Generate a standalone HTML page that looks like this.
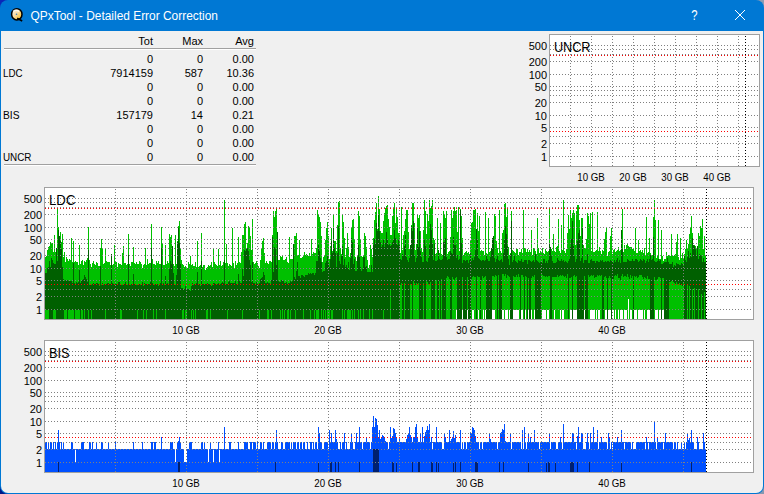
<!DOCTYPE html>
<html><head><meta charset="utf-8"><style>
html,body{margin:0;padding:0;background:#fff;}
body{width:764px;height:494px;overflow:hidden;}
svg{display:block;font-family:"Liberation Sans",sans-serif;font-size:11px;}
</style></head><body>
<svg width="764" height="494" viewBox="0 0 764 494" shape-rendering="crispEdges">
<rect x="0" y="0" width="10" height="10" fill="#0a28b8"/><rect x="754" y="0" width="10" height="10" fill="#8c9cb4"/><rect x="0" y="484" width="10" height="10" fill="#001888"/><rect x="754" y="484" width="10" height="10" fill="#8898b0"/><rect x="0" y="0" width="764" height="494" rx="8" fill="#0078d4" shape-rendering="auto"/><path d="M1 31H763V486a7 7 0 0 1 -7 7H8a7 7 0 0 1 -7 -7Z" fill="#f0f0f0" shape-rendering="auto"/><text x="30.5" y="20" fill="#fff" font-size="12px" textLength="187.5" lengthAdjust="spacingAndGlyphs">QPxTool - Detailed Error Correction</text><defs><linearGradient id="ig" x1="0" y1="0" x2="1" y2="1"><stop offset="0" stop-color="#fff6e8"/><stop offset="0.45" stop-color="#f8dca8"/><stop offset="1" stop-color="#ffb800"/></linearGradient></defs><g shape-rendering="auto"><ellipse cx="16.8" cy="14.3" rx="5.2" ry="5.6" fill="url(#ig)" stroke="#000" stroke-width="1.5"/><path d="M13 11.5q3 -2.5 6 0" stroke="#fff" stroke-width="1.5" fill="none" opacity="0.8"/><circle cx="16.5" cy="14.3" r="0.8" fill="#3a7ab8"/><path d="M17.2 18.3l5 2.7" stroke="#000" stroke-width="1.6"/></g><text x="691.3" y="20" fill="#fff" font-size="14px" textLength="6.3" lengthAdjust="spacingAndGlyphs">?</text><path d="M735 10L745 20M745 10L735 20" stroke="#fff" stroke-width="1.1"/><path d="M4 48.5H256" stroke="#a0a0a0"/><path d="M4 49.5H256" stroke="#fff"/><path d="M4 164.5H256" stroke="#a0a0a0"/><path d="M4 165.5H256" stroke="#fff"/><rect x="549" y="34" width="211" height="133" fill="#fff"/>

<path d="M550 45.5H759M550 49.5H759M550 54.5H759M550 61.5H759M550 74.5H759M550 86.5H759M550 90.5H759M550 95.5H759M550 102.5H759M550 115.5H759M550 127.5H759M550 136.5H759M550 143.5H759M550 156.5H759" stroke="#808080" stroke-dasharray="1 2" fill="none"/>
<path d="M550 55.5H759M550 131.5H759" stroke="#f00" stroke-dasharray="1 2" fill="none"/>
<path d="M570.5 166V34M591.5 166V34M612.5 166V34M633.5 166V34M654.5 166V34M675.5 166V34M696.5 166V34M717.5 166V34M738.5 166V34" stroke="#808080" stroke-dasharray="1 2" fill="none"/>
<path d="M745.5 166V34" stroke="#000" stroke-dasharray="1 2" fill="none"/>
<rect x="549.5" y="34.5" width="210" height="132" fill="none" stroke="#a0a0a0"/><rect x="44" y="187" width="710" height="133" fill="#fff"/>
<path d="M45 257h1V319h-1ZM46 256h1V319h-1ZM47 250h1V319h-1ZM48 247h1V319h-1ZM49 246h1V319h-1ZM50 242h1V319h-1ZM51 243h2V319h-2ZM53 252h1V319h-1ZM54 235h1V319h-1ZM55 252h1V319h-1ZM56 250h1V319h-1ZM57 208h1V319h-1ZM58 227h1V319h-1ZM59 242h1V319h-1ZM60 232h1V319h-1ZM61 242h1V319h-1ZM62 234h1V319h-1ZM63 257h1V319h-1ZM64 252h1V319h-1ZM65 262h1V319h-1ZM66 257h1V319h-1ZM67 259h1V319h-1ZM68 261h1V319h-1ZM69 259h1V319h-1ZM70 260h1V319h-1ZM71 238h1V319h-1ZM72 262h1V319h-1ZM73 241h1V319h-1ZM74 262h1V319h-1ZM75 261h1V319h-1ZM76 262h2V319h-2ZM78 265h1V319h-1ZM79 245h1V319h-1ZM80 264h1V319h-1ZM81 261h1V319h-1ZM82 260h1V319h-1ZM83 265h1V319h-1ZM84 261h1V319h-1ZM85 262h1V319h-1ZM86 260h1V319h-1ZM87 258h1V319h-1ZM88 227h1V319h-1ZM89 260h1V319h-1ZM90 264h1V319h-1ZM91 267h1V319h-1ZM92 263h1V319h-1ZM93 261h1V319h-1ZM94 264h1V319h-1ZM95 265h1V319h-1ZM96 262h1V319h-1ZM97 263h1V319h-1ZM98 266h2V319h-2ZM100 248h1V319h-1ZM101 239h1V319h-1ZM102 248h1V319h-1ZM103 264h1V319h-1ZM104 263h1V319h-1ZM105 249h1V319h-1ZM106 261h1V319h-1ZM107 262h3V319h-3ZM110 265h1V319h-1ZM111 261h1V319h-1ZM112 265h1V319h-1ZM113 264h1V319h-1ZM114 245h1V319h-1ZM115 261h1V319h-1ZM116 262h1V319h-1ZM117 267h1V319h-1ZM118 263h1V319h-1ZM119 264h2V319h-2ZM121 265h1V319h-1ZM122 253h1V319h-1ZM123 246h1V319h-1ZM124 263h2V319h-2ZM126 265h1V319h-1ZM127 264h1V319h-1ZM128 234h1V319h-1ZM129 264h1V319h-1ZM130 266h1V319h-1ZM131 262h2V319h-2ZM133 247h1V319h-1ZM134 263h1V319h-1ZM135 264h1V319h-1ZM136 262h1V319h-1ZM137 264h2V319h-2ZM139 261h1V319h-1ZM140 262h1V319h-1ZM141 264h1V319h-1ZM142 268h1V319h-1ZM143 265h1V319h-1ZM144 264h1V319h-1ZM145 248h1V319h-1ZM146 265h1V319h-1ZM147 259h1V319h-1ZM148 264h1V319h-1ZM149 263h2V319h-2ZM151 224h1V319h-1ZM152 259h1V319h-1ZM153 264h2V319h-2ZM155 265h1V319h-1ZM156 261h1V319h-1ZM157 263h1V319h-1ZM158 261h1V319h-1ZM159 264h2V319h-2ZM161 227h1V319h-1ZM162 243h1V319h-1ZM163 265h2V319h-2ZM165 245h1V319h-1ZM166 264h1V319h-1ZM167 261h1V319h-1ZM168 263h1V319h-1ZM169 234h1V319h-1ZM170 237h1V319h-1ZM171 235h1V319h-1ZM172 251h1V319h-1ZM173 264h1V319h-1ZM174 266h1V319h-1ZM175 235h1V319h-1ZM176 264h1V319h-1ZM177 241h1V319h-1ZM178 226h1V319h-1ZM179 221h1V319h-1ZM180 248h1V319h-1ZM181 260h1V319h-1ZM182 264h1V319h-1ZM183 265h1V319h-1ZM184 267h1V319h-1ZM185 266h1V319h-1ZM186 269h1V319h-1ZM187 268h1V319h-1ZM188 262h1V319h-1ZM189 264h1V319h-1ZM190 256h1V319h-1ZM191 265h1V319h-1ZM192 264h1V319h-1ZM193 266h2V319h-2ZM195 262h1V319h-1ZM196 267h1V319h-1ZM197 241h1V319h-1ZM198 267h1V319h-1ZM199 266h1V319h-1ZM200 265h1V319h-1ZM201 233h1V319h-1ZM202 267h1V319h-1ZM203 265h2V319h-2ZM205 270h1V319h-1ZM206 268h1V319h-1ZM207 267h1V319h-1ZM208 265h1V319h-1ZM209 266h1V319h-1ZM210 265h1V319h-1ZM211 262h1V319h-1ZM212 267h1V319h-1ZM213 248h1V319h-1ZM214 262h1V319h-1ZM215 264h1V319h-1ZM216 265h1V319h-1ZM217 266h1V319h-1ZM218 249h1V319h-1ZM219 265h1V319h-1ZM220 261h1V319h-1ZM221 266h1V319h-1ZM222 265h1V319h-1ZM223 262h1V319h-1ZM224 200h1V319h-1ZM225 263h1V319h-1ZM226 244h1V319h-1ZM227 263h1V319h-1ZM228 266h1V319h-1ZM229 264h1V319h-1ZM230 265h1V319h-1ZM231 266h1V319h-1ZM232 228h1V319h-1ZM233 263h1V319h-1ZM234 269h1V319h-1ZM235 261h1V319h-1ZM236 265h1V319h-1ZM237 263h1V319h-1ZM238 237h1V319h-1ZM239 262h1V319h-1ZM240 263h1V319h-1ZM241 252h1V319h-1ZM242 235h2V319h-2ZM244 224h1V319h-1ZM245 222h1V319h-1ZM246 252h1V319h-1ZM247 243h1V319h-1ZM248 226h1V319h-1ZM249 228h1V319h-1ZM250 236h1V319h-1ZM251 250h1V319h-1ZM252 219h1V319h-1ZM253 262h1V319h-1ZM254 264h1V319h-1ZM255 263h1V319h-1ZM256 261h1V319h-1ZM257 263h1V319h-1ZM258 266h1V319h-1ZM259 268h1V319h-1ZM260 260h1V319h-1ZM261 249h1V319h-1ZM262 241h1V319h-1ZM263 238h1V319h-1ZM264 253h1V319h-1ZM265 263h1V319h-1ZM266 261h1V319h-1ZM267 263h1V319h-1ZM268 264h1V319h-1ZM269 261h2V319h-2ZM271 262h1V319h-1ZM272 235h1V319h-1ZM273 211h1V319h-1ZM274 217h1V319h-1ZM275 211h1V319h-1ZM276 209h1V319h-1ZM277 258h1V319h-1ZM278 260h2V319h-2ZM280 256h1V319h-1ZM281 257h1V319h-1ZM282 255h1V319h-1ZM283 260h2V319h-2ZM285 259h1V319h-1ZM286 257h1V319h-1ZM287 262h1V319h-1ZM288 263h1V319h-1ZM289 237h1V319h-1ZM290 259h3V319h-3ZM293 258h1V319h-1ZM294 236h2V319h-2ZM296 233h1V319h-1ZM297 256h1V319h-1ZM298 255h1V319h-1ZM299 240h1V319h-1ZM300 258h2V319h-2ZM302 257h1V319h-1ZM303 255h1V319h-1ZM304 252h1V319h-1ZM305 255h1V319h-1ZM306 254h1V319h-1ZM307 255h1V319h-1ZM308 256h1V319h-1ZM309 253h1V319h-1ZM310 256h1V319h-1ZM311 239h1V319h-1ZM312 254h1V319h-1ZM313 252h1V319h-1ZM314 253h2V319h-2ZM316 248h1V319h-1ZM317 210h1V319h-1ZM318 214h1V319h-1ZM319 217h1V319h-1ZM320 222h1V319h-1ZM321 236h1V319h-1ZM322 262h1V319h-1ZM323 257h1V319h-1ZM324 255h1V319h-1ZM325 240h1V319h-1ZM326 228h1V319h-1ZM327 222h1V319h-1ZM328 236h1V319h-1ZM329 259h1V319h-1ZM330 246h1V319h-1ZM331 228h1V319h-1ZM332 251h1V319h-1ZM333 214h1V319h-1ZM334 241h2V319h-2ZM336 251h1V319h-1ZM337 225h1V319h-1ZM338 202h1V319h-1ZM339 201h1V319h-1ZM340 248h1V319h-1ZM341 254h1V319h-1ZM342 214h1V319h-1ZM343 222h1V319h-1ZM344 238h1V319h-1ZM345 257h1V319h-1ZM346 248h1V319h-1ZM347 233h1V319h-1ZM348 247h1V319h-1ZM349 257h1V319h-1ZM350 253h1V319h-1ZM351 227h1V319h-1ZM352 220h1V319h-1ZM353 219h1V319h-1ZM354 239h1V319h-1ZM355 257h1V319h-1ZM356 261h1V319h-1ZM357 255h1V319h-1ZM358 211h1V319h-1ZM359 216h1V319h-1ZM360 239h1V319h-1ZM361 256h1V319h-1ZM362 257h1V319h-1ZM363 255h1V319h-1ZM364 233h1V319h-1ZM365 236h1V319h-1ZM366 247h1V319h-1ZM367 260h1V319h-1ZM368 268h1V319h-1ZM369 265h1V319h-1ZM370 245h1V319h-1ZM371 249h1V319h-1ZM372 257h1V319h-1ZM373 238h1V319h-1ZM374 220h1V319h-1ZM375 212h1V319h-1ZM376 203h1V319h-1ZM377 229h1V319h-1ZM378 196h1V319h-1ZM379 209h1V319h-1ZM380 231h1V319h-1ZM381 233h2V319h-2ZM383 221h1V319h-1ZM384 213h1V319h-1ZM385 208h1V319h-1ZM386 206h1V319h-1ZM387 205h1V319h-1ZM388 219h1V319h-1ZM389 227h1V319h-1ZM390 235h2V319h-2ZM392 216h1V319h-1ZM393 209h1V319h-1ZM394 203h1V319h-1ZM395 223h1V319h-1ZM396 208h1V319h-1ZM397 217h1V319h-1ZM398 233h2V319h-2ZM400 253h1V319h-1ZM401 207h1V319h-1ZM402 250h1V319h-1ZM403 235h1V319h-1ZM404 231h1V319h-1ZM405 219h1V319h-1ZM406 210h2V319h-2ZM408 232h1V319h-1ZM409 249h2V319h-2ZM411 225h1V319h-1ZM412 203h2V319h-2ZM414 223h1V319h-1ZM415 250h1V319h-1ZM416 244h1V319h-1ZM417 215h1V319h-1ZM418 218h1V319h-1ZM419 215h1V319h-1ZM420 231h1V319h-1ZM421 248h1V319h-1ZM422 252h1V319h-1ZM423 230h1V319h-1ZM424 200h1V319h-1ZM425 211h1V319h-1ZM426 234h1V319h-1ZM427 214h1V319h-1ZM428 221h1V319h-1ZM429 200h1V319h-1ZM430 208h1V319h-1ZM431 206h1V319h-1ZM432 200h1V319h-1ZM433 238h1V319h-1ZM434 240h1V319h-1ZM435 254h1V319h-1ZM436 253h1V319h-1ZM437 218h1V319h-1ZM438 250h1V319h-1ZM439 253h1V319h-1ZM440 223h1V319h-1ZM441 254h1V319h-1ZM442 255h1V319h-1ZM443 211h1V319h-1ZM444 214h1V319h-1ZM445 218h1V319h-1ZM446 211h1V319h-1ZM447 254h1V319h-1ZM448 252h1V319h-1ZM449 251h1V319h-1ZM450 237h1V319h-1ZM451 210h1V319h-1ZM452 218h1V319h-1ZM453 211h1V319h-1ZM454 207h1V319h-1ZM455 211h1V319h-1ZM456 210h1V319h-1ZM457 232h1V319h-1ZM458 207h1V319h-1ZM459 251h1V319h-1ZM460 209h1V319h-1ZM461 216h1V319h-1ZM462 238h1V319h-1ZM463 255h1V319h-1ZM464 253h1V319h-1ZM465 252h1V319h-1ZM466 251h1V319h-1ZM467 253h1V319h-1ZM468 252h1V319h-1ZM469 254h1V319h-1ZM470 241h1V319h-1ZM471 223h1V319h-1ZM472 222h1V319h-1ZM473 210h2V319h-2ZM475 209h1V319h-1ZM476 229h1V319h-1ZM477 213h1V319h-1ZM478 231h1V319h-1ZM479 216h1V319h-1ZM480 251h1V319h-1ZM481 250h1V319h-1ZM482 251h2V319h-2ZM484 255h1V319h-1ZM485 212h1V319h-1ZM486 253h1V319h-1ZM487 254h1V319h-1ZM488 218h1V319h-1ZM489 252h1V319h-1ZM490 251h2V319h-2ZM492 252h2V319h-2ZM494 214h1V319h-1ZM495 216h1V319h-1ZM496 241h1V319h-1ZM497 248h1V319h-1ZM498 253h1V319h-1ZM499 210h1V319h-1ZM500 251h1V319h-1ZM501 253h1V319h-1ZM502 233h1V319h-1ZM503 230h1V319h-1ZM504 204h1V319h-1ZM505 203h1V319h-1ZM506 217h1V319h-1ZM507 208h1V319h-1ZM508 247h1V319h-1ZM509 255h1V319h-1ZM510 253h1V319h-1ZM511 211h1V319h-1ZM512 250h1V319h-1ZM513 251h1V319h-1ZM514 252h1V319h-1ZM515 253h1V319h-1ZM516 248h1V319h-1ZM517 249h1V319h-1ZM518 255h1V319h-1ZM519 252h2V319h-2ZM521 249h1V319h-1ZM522 253h1V319h-1ZM523 210h1V319h-1ZM524 248h1V319h-1ZM525 249h1V319h-1ZM526 252h1V319h-1ZM527 249h1V319h-1ZM528 252h1V319h-1ZM529 250h1V319h-1ZM530 252h1V319h-1ZM531 230h1V319h-1ZM532 255h1V319h-1ZM533 248h2V319h-2ZM535 251h1V319h-1ZM536 254h1V319h-1ZM537 218h1V319h-1ZM538 248h1V319h-1ZM539 253h1V319h-1ZM540 251h1V319h-1ZM541 253h1V319h-1ZM542 248h1V319h-1ZM543 253h1V319h-1ZM544 254h1V319h-1ZM545 249h1V319h-1ZM546 251h1V319h-1ZM547 252h1V319h-1ZM548 251h1V319h-1ZM549 209h1V319h-1ZM550 253h1V319h-1ZM551 249h1V319h-1ZM552 251h1V319h-1ZM553 234h1V319h-1ZM554 251h1V319h-1ZM555 252h1V319h-1ZM556 247h1V319h-1ZM557 246h1V319h-1ZM558 219h1V319h-1ZM559 251h1V319h-1ZM560 253h1V319h-1ZM561 225h1V319h-1ZM562 250h1V319h-1ZM563 200h1V319h-1ZM564 251h1V319h-1ZM565 253h1V319h-1ZM566 249h1V319h-1ZM567 233h1V319h-1ZM568 215h1V319h-1ZM569 229h1V319h-1ZM570 210h1V319h-1ZM571 218h1V319h-1ZM572 213h1V319h-1ZM573 210h1V319h-1ZM574 213h1V319h-1ZM575 245h1V319h-1ZM576 211h1V319h-1ZM577 205h2V319h-2ZM579 220h1V319h-1ZM580 236h1V319h-1ZM581 218h2V319h-2ZM583 245h1V319h-1ZM584 248h2V319h-2ZM586 239h1V319h-1ZM587 213h1V319h-1ZM588 216h1V319h-1ZM589 224h1V319h-1ZM590 213h1V319h-1ZM591 251h1V319h-1ZM592 212h1V319h-1ZM593 252h2V319h-2ZM595 251h1V319h-1ZM596 250h1V319h-1ZM597 212h1V319h-1ZM598 251h1V319h-1ZM599 247h1V319h-1ZM600 251h1V319h-1ZM601 254h1V319h-1ZM602 250h1V319h-1ZM603 251h1V319h-1ZM604 239h1V319h-1ZM605 232h1V319h-1ZM606 227h1V319h-1ZM607 256h1V319h-1ZM608 252h1V319h-1ZM609 251h1V319h-1ZM610 236h1V319h-1ZM611 228h1V319h-1ZM612 254h1V319h-1ZM613 250h1V319h-1ZM614 249h1V319h-1ZM615 252h1V319h-1ZM616 251h1V319h-1ZM617 250h1V319h-1ZM618 247h1V319h-1ZM619 251h1V319h-1ZM620 250h1V319h-1ZM621 233h1V319h-1ZM622 209h1V319h-1ZM623 252h1V319h-1ZM624 245h1V319h-1ZM625 249h1V319h-1ZM626 245h1V319h-1ZM627 244h1V319h-1ZM628 246h1V319h-1ZM629 247h3V319h-3ZM632 249h1V319h-1ZM633 248h1V319h-1ZM634 251h1V319h-1ZM635 228h1V319h-1ZM636 253h2V319h-2ZM638 240h1V319h-1ZM639 251h1V319h-1ZM640 250h1V319h-1ZM641 252h1V319h-1ZM642 250h1V319h-1ZM643 253h1V319h-1ZM644 248h1V319h-1ZM645 255h1V319h-1ZM646 217h1V319h-1ZM647 253h1V319h-1ZM648 252h1V319h-1ZM649 238h1V319h-1ZM650 253h1V319h-1ZM651 256h1V319h-1ZM652 255h1V319h-1ZM653 217h1V319h-1ZM654 200h1V319h-1ZM655 220h1V319h-1ZM656 258h1V319h-1ZM657 256h1V319h-1ZM658 220h1V319h-1ZM659 259h2V319h-2ZM661 230h1V319h-1ZM662 256h1V319h-1ZM663 261h1V319h-1ZM664 259h2V319h-2ZM666 252h1V319h-1ZM667 256h1V319h-1ZM668 255h1V319h-1ZM669 256h2V319h-2ZM671 234h1V319h-1ZM672 256h2V319h-2ZM674 255h1V319h-1ZM675 254h1V319h-1ZM676 242h1V319h-1ZM677 234h1V319h-1ZM678 257h1V319h-1ZM679 260h1V319h-1ZM680 238h1V319h-1ZM681 258h1V319h-1ZM682 253h1V319h-1ZM683 258h1V319h-1ZM684 254h1V319h-1ZM685 249h1V319h-1ZM686 240h1V319h-1ZM687 249h1V319h-1ZM688 244h1V319h-1ZM689 234h1V319h-1ZM690 227h1V319h-1ZM691 216h1V319h-1ZM692 233h1V319h-1ZM693 249h1V319h-1ZM694 245h1V319h-1ZM695 246h1V319h-1ZM696 249h1V319h-1ZM697 246h1V319h-1ZM698 233h1V319h-1ZM699 236h1V319h-1ZM700 226h1V319h-1ZM701 228h1V319h-1ZM702 219h1V319h-1ZM703 249h1V319h-1ZM704 236h1V319h-1ZM705 256h1V319h-1Z" fill="#00c000"/><path d="M45 273h2V310h-2ZM47 268h1V310h-1ZM48 267h1V310h-1ZM49 261h1V319h-1ZM50 267h1V319h-1ZM51 258h1V319h-1ZM52 260h1V319h-1ZM53 263h1V310h-1ZM54 264h2V310h-2ZM56 248h1V319h-1ZM57 261h1V319h-1ZM58 230h1V319h-1ZM59 236h1V319h-1ZM60 241h1V319h-1ZM61 249h1V319h-1ZM62 267h1V319h-1ZM63 279h1V319h-1ZM64 281h1V310h-1ZM65 280h2V310h-2ZM67 280h1V319h-1ZM68 281h4V310h-4ZM72 283h1V310h-1ZM73 263h1V310h-1ZM74 283h1V319h-1ZM75 285h1V310h-1ZM76 282h1V310h-1ZM77 283h1V310h-1ZM78 282h1V310h-1ZM79 270h1V310h-1ZM80 283h1V319h-1ZM81 281h1V310h-1ZM82 280h1V310h-1ZM83 279h1V319h-1ZM84 275h1V310h-1ZM85 277h1V319h-1ZM86 279h1V319h-1ZM87 282h1V319h-1ZM88 250h1V310h-1ZM89 285h1V319h-1ZM90 284h1V319h-1ZM91 285h1V310h-1ZM92 284h1V319h-1ZM93 283h1V319h-1ZM94 284h2V319h-2ZM96 283h2V319h-2ZM98 284h1V319h-1ZM99 286h1V319h-1ZM100 266h1V319h-1ZM101 285h1V319h-1ZM102 283h1V319h-1ZM103 285h1V319h-1ZM104 284h1V319h-1ZM105 285h1V310h-1ZM106 284h1V319h-1ZM107 283h2V319h-2ZM109 284h2V319h-2ZM111 254h1V319h-1ZM112 283h1V319h-1ZM113 284h5V319h-5ZM118 282h2V319h-2ZM120 285h2V310h-2ZM122 285h2V319h-2ZM124 284h1V319h-1ZM125 282h1V319h-1ZM126 284h1V319h-1ZM127 285h1V319h-1ZM128 255h1V319h-1ZM129 284h1V319h-1ZM130 285h1V319h-1ZM131 284h2V319h-2ZM133 274h1V319h-1ZM134 284h2V319h-2ZM136 285h1V319h-1ZM137 285h1V310h-1ZM138 284h2V319h-2ZM140 285h1V319h-1ZM141 284h1V319h-1ZM142 282h1V319h-1ZM143 286h1V310h-1ZM144 283h1V319h-1ZM145 284h1V319h-1ZM146 284h1V310h-1ZM147 284h3V319h-3ZM150 282h1V319h-1ZM151 248h1V319h-1ZM152 283h1V319h-1ZM153 284h1V310h-1ZM154 285h1V319h-1ZM155 284h1V319h-1ZM156 285h1V310h-1ZM157 284h1V319h-1ZM158 286h1V319h-1ZM159 284h1V319h-1ZM160 283h1V319h-1ZM161 248h1V319h-1ZM162 284h1V319h-1ZM163 283h1V319h-1ZM164 285h1V319h-1ZM165 276h1V310h-1ZM166 284h1V319h-1ZM167 283h1V319h-1ZM168 285h1V319h-1ZM169 269h1V319h-1ZM170 261h1V319h-1ZM171 264h1V319h-1ZM172 246h1V319h-1ZM173 273h1V319h-1ZM174 285h2V319h-2ZM176 275h1V319h-1ZM177 242h1V319h-1ZM178 228h1V319h-1ZM179 243h1V319h-1ZM180 264h1V319h-1ZM181 288h1V319h-1ZM182 288h1V310h-1ZM183 289h1V310h-1ZM184 289h1V319h-1ZM185 286h1V310h-1ZM186 290h1V310h-1ZM187 289h3V319h-3ZM190 291h1V319h-1ZM191 286h1V310h-1ZM192 283h1V319h-1ZM193 285h1V310h-1ZM194 284h1V319h-1ZM195 284h1V310h-1ZM196 283h1V319h-1ZM197 272h1V319h-1ZM198 284h2V319h-2ZM200 286h1V319h-1ZM201 261h1V319h-1ZM202 284h2V319h-2ZM204 285h1V319h-1ZM205 284h1V319h-1ZM206 284h1V310h-1ZM207 283h1V310h-1ZM208 284h2V319h-2ZM210 284h1V310h-1ZM211 286h1V319h-1ZM212 285h1V319h-1ZM213 283h2V319h-2ZM215 284h3V319h-3ZM218 283h1V319h-1ZM219 285h1V319h-1ZM220 284h1V319h-1ZM221 283h1V319h-1ZM222 282h1V319h-1ZM223 283h1V319h-1ZM224 260h1V319h-1ZM225 285h1V319h-1ZM226 284h1V319h-1ZM227 284h1V310h-1ZM228 282h1V319h-1ZM229 281h1V319h-1ZM230 283h5V319h-5ZM235 281h1V319h-1ZM236 284h2V319h-2ZM238 274h1V319h-1ZM239 281h1V319h-1ZM240 283h2V319h-2ZM242 269h1V310h-1ZM243 276h1V319h-1ZM244 250h1V319h-1ZM245 251h1V319h-1ZM246 249h1V319h-1ZM247 248h1V319h-1ZM248 251h1V319h-1ZM249 260h1V319h-1ZM250 265h1V319h-1ZM251 282h1V319h-1ZM252 262h1V319h-1ZM253 283h2V319h-2ZM255 285h1V319h-1ZM256 282h1V319h-1ZM257 284h2V319h-2ZM259 283h1V310h-1ZM260 279h1V319h-1ZM261 278h1V319h-1ZM262 277h1V319h-1ZM263 272h1V319h-1ZM264 275h1V319h-1ZM265 283h2V319h-2ZM267 282h1V310h-1ZM268 283h1V310h-1ZM269 283h1V319h-1ZM270 284h1V319h-1ZM271 280h1V310h-1ZM272 237h1V319h-1ZM273 272h1V319h-1ZM274 247h1V319h-1ZM275 249h1V319h-1ZM276 265h1V319h-1ZM277 232h1V319h-1ZM278 281h1V319h-1ZM279 282h1V319h-1ZM280 282h1V310h-1ZM281 280h1V319h-1ZM282 281h1V310h-1ZM283 281h1V319h-1ZM284 283h1V310h-1ZM285 283h1V319h-1ZM286 282h1V319h-1ZM287 284h1V310h-1ZM288 283h1V310h-1ZM289 283h1V319h-1ZM290 281h1V310h-1ZM291 282h1V319h-1ZM292 281h1V319h-1ZM293 244h1V319h-1ZM294 277h1V319h-1ZM295 279h1V310h-1ZM296 271h1V319h-1ZM297 262h1V319h-1ZM298 276h2V319h-2ZM300 278h1V319h-1ZM301 275h2V319h-2ZM303 276h1V310h-1ZM304 277h1V319h-1ZM305 275h3V319h-3ZM308 273h1V319h-1ZM309 274h1V319h-1ZM310 273h1V310h-1ZM311 274h1V319h-1ZM312 273h2V319h-2ZM314 275h1V310h-1ZM315 273h1V319h-1ZM316 261h2V310h-2ZM318 245h1V310h-1ZM319 251h1V319h-1ZM320 258h1V319h-1ZM321 262h1V310h-1ZM322 272h1V319h-1ZM323 271h1V310h-1ZM324 271h1V319h-1ZM325 263h1V310h-1ZM326 261h1V319h-1ZM327 255h1V310h-1ZM328 263h1V310h-1ZM329 267h1V310h-1ZM330 259h1V319h-1ZM331 241h1V310h-1ZM332 253h1V310h-1ZM333 228h1V319h-1ZM334 248h1V319h-1ZM335 253h1V319h-1ZM336 267h1V319h-1ZM337 253h1V319h-1ZM338 226h1V319h-1ZM339 261h1V319h-1ZM340 264h1V319h-1ZM341 256h1V319h-1ZM342 246h1V310h-1ZM343 265h1V319h-1ZM344 259h1V310h-1ZM345 267h1V319h-1ZM346 265h1V319h-1ZM347 268h1V310h-1ZM348 262h1V310h-1ZM349 270h1V310h-1ZM350 258h1V310h-1ZM351 238h1V319h-1ZM352 242h1V310h-1ZM353 264h1V319h-1ZM354 259h1V310h-1ZM355 271h2V319h-2ZM357 257h1V319h-1ZM358 245h1V310h-1ZM359 257h1V319h-1ZM360 267h1V310h-1ZM361 271h1V319h-1ZM362 269h1V319h-1ZM363 257h1V310h-1ZM364 257h1V319h-1ZM365 267h1V319h-1ZM366 266h1V319h-1ZM367 272h2V319h-2ZM369 272h1V310h-1ZM370 272h1V319h-1ZM371 265h1V319h-1ZM372 272h1V310h-1ZM373 245h1V319h-1ZM374 239h1V319h-1ZM375 243h1V319h-1ZM376 223h1V319h-1ZM377 231h1V319h-1ZM378 215h1V319h-1ZM379 231h1V319h-1ZM380 242h1V319h-1ZM381 247h1V319h-1ZM382 245h1V319h-1ZM383 240h1V310h-1ZM384 247h1V319h-1ZM385 243h1V319h-1ZM386 232h1V319h-1ZM387 240h1V319h-1ZM388 245h1V319h-1ZM389 244h1V319h-1ZM390 246h1V290h-1ZM391 245h1V319h-1ZM392 242h1V319h-1ZM393 239h1V319h-1ZM394 230h1V319h-1ZM395 238h1V319h-1ZM396 243h1V319h-1ZM397 245h1V319h-1ZM398 240h1V319h-1ZM399 245h1V319h-1ZM400 259h1V285h-1ZM401 260h1V283h-1ZM402 254h1V319h-1ZM403 256h1V319h-1ZM404 246h1V283h-1ZM405 235h1V319h-1ZM406 257h1V319h-1ZM407 260h1V319h-1ZM408 262h1V319h-1ZM409 258h1V319h-1ZM410 245h1V284h-1ZM411 226h1V285h-1ZM412 231h1V319h-1ZM413 221h1V281h-1ZM414 255h1V283h-1ZM415 262h1V285h-1ZM416 258h1V283h-1ZM417 227h1V284h-1ZM418 247h1V283h-1ZM419 231h1V319h-1ZM420 251h1V319h-1ZM421 257h1V319h-1ZM422 262h1V319h-1ZM423 262h1V283h-1ZM424 240h1V319h-1ZM425 246h1V319h-1ZM426 261h1V281h-1ZM427 262h1V282h-1ZM428 258h1V284h-1ZM429 245h1V284h-1ZM430 224h1V282h-1ZM431 230h1V319h-1ZM432 243h1V319h-1ZM433 260h1V319h-1ZM434 244h1V319h-1ZM435 261h1V281h-1ZM436 261h1V280h-1ZM437 260h1V319h-1ZM438 250h1V319h-1ZM439 259h1V281h-1ZM440 260h1V319h-1ZM441 260h1V279h-1ZM442 259h1V319h-1ZM443 242h2V319h-2ZM445 238h1V319h-1ZM446 257h1V278h-1ZM447 260h1V276h-1ZM448 259h1V277h-1ZM449 259h1V279h-1ZM450 251h1V319h-1ZM451 253h1V319h-1ZM452 254h1V277h-1ZM453 237h1V279h-1ZM454 245h1V280h-1ZM455 245h1V278h-1ZM456 258h1V277h-1ZM457 255h1V319h-1ZM458 260h1V319h-1ZM459 259h1V319h-1ZM460 210h1V319h-1ZM461 243h1V319h-1ZM462 263h1V277h-1ZM463 260h2V319h-2ZM465 261h1V319h-1ZM466 260h1V319h-1ZM467 260h1V277h-1ZM468 263h1V319h-1ZM469 260h1V319h-1ZM470 253h1V319h-1ZM471 261h1V279h-1ZM472 258h1V277h-1ZM473 260h1V276h-1ZM474 257h1V277h-1ZM475 250h1V277h-1ZM476 229h1V319h-1ZM477 239h1V276h-1ZM478 258h1V277h-1ZM479 259h1V277h-1ZM480 260h1V319h-1ZM481 261h1V280h-1ZM482 260h1V276h-1ZM483 260h1V278h-1ZM484 261h1V277h-1ZM485 260h1V276h-1ZM486 256h1V319h-1ZM487 259h1V319h-1ZM488 261h2V319h-2ZM490 257h1V319h-1ZM491 248h1V319h-1ZM492 238h1V276h-1ZM493 236h1V276h-1ZM494 258h1V277h-1ZM495 262h1V275h-1ZM496 259h1V276h-1ZM497 256h1V319h-1ZM498 260h1V275h-1ZM499 261h1V319h-1ZM500 260h1V319h-1ZM501 259h1V319h-1ZM502 262h1V274h-1ZM503 253h1V274h-1ZM504 239h1V276h-1ZM505 226h1V274h-1ZM506 234h1V278h-1ZM507 246h1V275h-1ZM508 259h1V276h-1ZM509 265h1V277h-1ZM510 254h1V319h-1ZM511 221h1V319h-1ZM512 262h1V319h-1ZM513 260h1V276h-1ZM514 256h1V277h-1ZM515 261h1V277h-1ZM516 262h1V275h-1ZM517 263h1V277h-1ZM518 260h1V274h-1ZM519 261h1V277h-1ZM520 261h1V319h-1ZM521 259h1V275h-1ZM522 262h1V275h-1ZM523 262h1V277h-1ZM524 260h1V319h-1ZM525 260h1V276h-1ZM526 260h1V277h-1ZM527 264h1V319h-1ZM528 260h1V278h-1ZM529 260h1V319h-1ZM530 261h1V319h-1ZM531 262h1V278h-1ZM532 261h1V276h-1ZM533 260h1V277h-1ZM534 262h1V275h-1ZM535 254h1V319h-1ZM536 260h1V319h-1ZM537 261h1V319h-1ZM538 262h1V319h-1ZM539 263h1V319h-1ZM540 262h1V319h-1ZM541 261h1V274h-1ZM542 263h1V275h-1ZM543 259h2V276h-2ZM545 263h1V277h-1ZM546 261h1V276h-1ZM547 263h1V277h-1ZM548 260h1V276h-1ZM549 244h1V276h-1ZM550 247h1V319h-1ZM551 256h1V319h-1ZM552 261h1V277h-1ZM553 263h3V277h-3ZM556 262h1V277h-1ZM557 258h1V275h-1ZM558 260h1V277h-1ZM559 261h1V276h-1ZM560 261h1V275h-1ZM561 259h1V276h-1ZM562 261h1V275h-1ZM563 260h1V276h-1ZM564 262h1V277h-1ZM565 261h1V276h-1ZM566 262h1V278h-1ZM567 263h1V274h-1ZM568 261h1V319h-1ZM569 259h1V278h-1ZM570 247h1V278h-1ZM571 239h1V277h-1ZM572 221h1V319h-1ZM573 246h1V276h-1ZM574 256h1V275h-1ZM575 262h1V277h-1ZM576 259h1V276h-1ZM577 241h1V319h-1ZM578 233h1V319h-1ZM579 230h1V319h-1ZM580 261h1V319h-1ZM581 258h1V319h-1ZM582 227h1V319h-1ZM583 263h1V319h-1ZM584 260h1V276h-1ZM585 260h2V319h-2ZM587 254h1V319h-1ZM588 263h1V275h-1ZM589 263h1V277h-1ZM590 260h1V276h-1ZM591 259h1V275h-1ZM592 261h1V276h-1ZM593 261h1V275h-1ZM594 261h1V278h-1ZM595 263h1V277h-1ZM596 261h1V277h-1ZM597 261h1V275h-1ZM598 262h1V276h-1ZM599 262h1V275h-1ZM600 260h1V276h-1ZM601 261h1V275h-1ZM602 260h1V319h-1ZM603 262h1V319h-1ZM604 262h1V277h-1ZM605 261h1V276h-1ZM606 262h1V278h-1ZM607 261h1V319h-1ZM608 261h1V278h-1ZM609 262h1V276h-1ZM610 260h1V278h-1ZM611 261h1V319h-1ZM612 262h1V279h-1ZM613 263h1V279h-1ZM614 260h1V276h-1ZM615 262h1V275h-1ZM616 260h1V276h-1ZM617 258h1V274h-1ZM618 262h1V278h-1ZM619 260h1V278h-1ZM620 263h1V280h-1ZM621 230h1V276h-1ZM622 249h1V274h-1ZM623 262h1V277h-1ZM624 262h2V276h-2ZM626 262h1V277h-1ZM627 259h1V274h-1ZM628 260h1V277h-1ZM629 261h1V279h-1ZM630 261h1V275h-1ZM631 261h1V278h-1ZM632 259h1V276h-1ZM633 261h1V319h-1ZM634 261h1V276h-1ZM635 259h1V277h-1ZM636 259h1V276h-1ZM637 260h1V278h-1ZM638 262h1V277h-1ZM639 261h1V275h-1ZM640 259h1V275h-1ZM641 260h1V275h-1ZM642 261h1V277h-1ZM643 259h1V279h-1ZM644 260h1V277h-1ZM645 263h1V278h-1ZM646 261h1V279h-1ZM647 259h1V276h-1ZM648 262h1V279h-1ZM649 259h1V279h-1ZM650 255h1V319h-1ZM651 260h1V319h-1ZM652 259h1V319h-1ZM653 237h1V319h-1ZM654 261h1V277h-1ZM655 262h2V280h-2ZM657 261h1V279h-1ZM658 259h1V277h-1ZM659 261h1V277h-1ZM660 260h1V278h-1ZM661 264h1V319h-1ZM662 264h1V278h-1ZM663 263h1V278h-1ZM664 262h3V319h-3ZM667 258h1V319h-1ZM668 262h1V319h-1ZM669 264h2V282h-2ZM671 264h1V281h-1ZM672 262h1V281h-1ZM673 267h1V282h-1ZM674 265h1V283h-1ZM675 266h1V284h-1ZM676 263h1V282h-1ZM677 264h2V284h-2ZM679 265h1V283h-1ZM680 265h1V285h-1ZM681 263h1V284h-1ZM682 264h1V286h-1ZM683 266h1V283h-1ZM684 255h1V319h-1ZM685 260h1V319h-1ZM686 262h1V319h-1ZM687 257h1V285h-1ZM688 251h1V319h-1ZM689 258h1V286h-1ZM690 253h1V319h-1ZM691 257h1V319h-1ZM692 238h1V289h-1ZM693 245h1V319h-1ZM694 246h1V288h-1ZM695 249h1V319h-1ZM696 255h1V319h-1ZM697 246h1V319h-1ZM698 259h1V289h-1ZM699 254h1V319h-1ZM700 255h1V319h-1ZM701 256h1V294h-1ZM702 262h1V319h-1ZM703 258h1V319h-1ZM704 262h1V292h-1ZM705 262h1V319h-1Z" fill="#006000"/><path d="M456 310h1V319h-1ZM462 310h1V319h-1ZM467 310h1V319h-1ZM472 310h2V319h-2ZM478 310h1V319h-1ZM483 310h1V319h-1ZM485 310h1V319h-1ZM492 310h3V319h-3ZM502 310h2V319h-2ZM505 310h3V319h-3ZM509 310h1V319h-1ZM513 310h6V319h-6ZM521 310h2V319h-2ZM525 310h1V319h-1ZM528 310h1V319h-1ZM531 310h1V319h-1ZM534 310h1V319h-1ZM542 310h4V319h-4ZM547 310h2V319h-2ZM554 310h1V319h-1ZM560 310h1V319h-1ZM562 310h2V319h-2ZM570 310h2V319h-2ZM573 310h4V319h-4ZM584 310h1V319h-1ZM590 310h5V319h-5ZM596 310h1V319h-1ZM598 310h2V319h-2ZM605 310h2V319h-2ZM608 310h3V319h-3ZM612 310h2V319h-2ZM615 310h1V319h-1ZM618 310h1V319h-1ZM620 310h3V319h-3ZM624 310h3V319h-3ZM628 299h1V319h-1ZM630 310h2V319h-2ZM634 310h3V319h-3ZM638 310h5V319h-5ZM644 310h1V319h-1ZM647 310h3V319h-3ZM655 310h3V319h-3ZM659 310h2V319h-2ZM662 310h2V319h-2Z" fill="#fff"/>
<path d="M45 198.5H753M45 202.5H753M45 207.5H753M45 214.5H753M45 227.5H753M45 239.5H753M45 243.5H753M45 248.5H753M45 255.5H753M45 268.5H753M45 280.5H753M45 289.5H753M45 296.5H753M45 309.5H753" stroke="#808080" stroke-dasharray="1 2" fill="none"/>
<path d="M45 208.5H753M45 284.5H753" stroke="#f00" stroke-dasharray="1 2" fill="none"/>
<path d="M115.5 319V187M186.5 319V187M257.5 319V187M328.5 319V187M399.5 319V187M470.5 319V187M541.5 319V187M612.5 319V187M683.5 319V187" stroke="#808080" stroke-dasharray="1 2" fill="none"/>
<path d="M706.5 319V187" stroke="#000" stroke-dasharray="1 2" fill="none"/>
<rect x="44.5" y="187.5" width="709" height="132" fill="none" stroke="#a0a0a0"/><rect x="44" y="340" width="710" height="133" fill="#fff"/>
<path d="M45 442h2V472h-2ZM47 449h1V472h-1ZM48 442h1V472h-1ZM49 449h1V472h-1ZM50 442h2V472h-2ZM52 449h1V472h-1ZM53 442h1V472h-1ZM54 449h1V472h-1ZM55 442h1V472h-1ZM56 449h1V472h-1ZM57 442h1V472h-1ZM58 430h1V472h-1ZM59 442h1V472h-1ZM60 449h1V472h-1ZM61 442h1V472h-1ZM62 449h1V472h-1ZM63 442h1V472h-1ZM64 449h7V472h-7ZM71 442h2V472h-2ZM73 449h2V472h-2ZM75 462h1V472h-1ZM76 449h5V472h-5ZM81 442h3V472h-3ZM84 449h5V472h-5ZM89 442h2V472h-2ZM91 449h1V472h-1ZM92 442h1V472h-1ZM93 449h3V472h-3ZM96 442h1V472h-1ZM97 449h4V472h-4ZM101 442h2V472h-2ZM103 449h5V472h-5ZM108 442h1V472h-1ZM109 449h6V472h-6ZM115 442h1V472h-1ZM116 449h17V472h-17ZM133 442h1V472h-1ZM134 449h8V472h-8ZM142 442h1V472h-1ZM143 449h8V472h-8ZM151 442h2V472h-2ZM153 449h1V472h-1ZM154 442h2V472h-2ZM156 449h5V472h-5ZM161 437h1V472h-1ZM162 449h8V472h-8ZM170 442h3V472h-3ZM173 449h2V472h-2ZM175 462h1V472h-1ZM176 449h1V472h-1ZM177 442h1V472h-1ZM178 441h1V472h-1ZM179 437h1V472h-1ZM180 442h1V472h-1ZM181 449h3V472h-3ZM184 462h3V472h-3ZM187 449h2V472h-2ZM189 442h3V472h-3ZM192 449h9V472h-9ZM201 442h2V472h-2ZM203 449h1V472h-1ZM204 442h1V472h-1ZM205 449h3V472h-3ZM208 462h1V472h-1ZM209 449h1V472h-1ZM210 442h1V472h-1ZM211 449h2V472h-2ZM213 462h1V472h-1ZM214 449h4V472h-4ZM218 442h1V472h-1ZM219 462h1V472h-1ZM220 449h4V472h-4ZM224 427h1V472h-1ZM225 449h4V472h-4ZM229 442h2V472h-2ZM231 449h7V472h-7ZM238 442h1V472h-1ZM239 449h5V472h-5ZM244 442h4V472h-4ZM248 449h2V472h-2ZM250 442h2V472h-2ZM252 449h1V472h-1ZM253 442h3V472h-3ZM256 449h1V472h-1ZM257 442h1V472h-1ZM258 449h2V472h-2ZM260 442h2V472h-2ZM262 449h1V472h-1ZM263 442h1V472h-1ZM264 449h3V472h-3ZM267 442h4V472h-4ZM271 449h1V472h-1ZM272 442h2V472h-2ZM274 449h1V472h-1ZM275 442h1V472h-1ZM276 430h1V472h-1ZM277 442h1V472h-1ZM278 449h3V472h-3ZM281 442h2V472h-2ZM283 449h2V472h-2ZM285 442h5V472h-5ZM290 449h1V472h-1ZM291 442h1V472h-1ZM292 449h1V472h-1ZM293 442h3V472h-3ZM296 449h1V472h-1ZM297 442h2V472h-2ZM299 449h1V472h-1ZM300 442h2V472h-2ZM302 449h1V472h-1ZM303 442h2V472h-2ZM305 449h2V472h-2ZM307 442h1V472h-1ZM308 449h2V472h-2ZM310 442h2V472h-2ZM312 449h1V472h-1ZM313 442h1V472h-1ZM314 449h1V472h-1ZM315 442h2V472h-2ZM317 449h1V472h-1ZM318 427h1V472h-1ZM319 433h1V472h-1ZM320 442h2V472h-2ZM322 449h2V472h-2ZM324 442h4V472h-4ZM328 449h1V472h-1ZM329 430h1V472h-1ZM330 442h1V472h-1ZM331 433h1V472h-1ZM332 442h3V472h-3ZM335 430h1V472h-1ZM336 439h1V472h-1ZM337 442h1V472h-1ZM338 449h2V472h-2ZM340 442h1V472h-1ZM341 449h1V472h-1ZM342 442h2V472h-2ZM344 433h1V472h-1ZM345 449h1V472h-1ZM346 442h1V472h-1ZM347 449h3V472h-3ZM350 442h1V472h-1ZM351 433h1V472h-1ZM352 442h1V472h-1ZM353 449h2V472h-2ZM355 442h1V472h-1ZM356 433h1V472h-1ZM357 442h2V472h-2ZM359 427h1V472h-1ZM360 442h2V472h-2ZM362 449h1V472h-1ZM363 442h3V472h-3ZM366 437h1V472h-1ZM367 442h3V472h-3ZM370 449h1V472h-1ZM371 442h1V472h-1ZM372 427h1V472h-1ZM373 416h1V472h-1ZM374 427h1V472h-1ZM375 418h1V472h-1ZM376 419h1V472h-1ZM377 425h1V472h-1ZM378 438h1V472h-1ZM379 430h1V472h-1ZM380 439h1V472h-1ZM381 437h1V472h-1ZM382 435h1V472h-1ZM383 436h1V472h-1ZM384 437h1V472h-1ZM385 441h1V472h-1ZM386 442h2V472h-2ZM388 449h1V472h-1ZM389 442h1V472h-1ZM390 427h1V472h-1ZM391 438h1V472h-1ZM392 436h1V472h-1ZM393 428h1V472h-1ZM394 429h1V472h-1ZM395 433h1V472h-1ZM396 438h1V472h-1ZM397 442h2V472h-2ZM399 437h1V472h-1ZM400 442h6V472h-6ZM406 439h1V472h-1ZM407 435h1V472h-1ZM408 433h1V472h-1ZM409 427h1V472h-1ZM410 435h1V472h-1ZM411 437h1V472h-1ZM412 442h1V472h-1ZM413 437h1V472h-1ZM414 438h1V472h-1ZM415 427h1V472h-1ZM416 424h1V472h-1ZM417 437h1V472h-1ZM418 442h2V472h-2ZM420 433h1V472h-1ZM421 442h1V472h-1ZM422 427h1V472h-1ZM423 442h1V472h-1ZM424 436h1V472h-1ZM425 432h1V472h-1ZM426 430h1V472h-1ZM427 426h1V472h-1ZM428 430h1V472h-1ZM429 424h1V472h-1ZM430 442h1V472h-1ZM431 437h1V472h-1ZM432 449h1V472h-1ZM433 442h3V472h-3ZM436 427h1V472h-1ZM437 442h5V472h-5ZM442 449h2V472h-2ZM444 433h1V472h-1ZM445 437h1V472h-1ZM446 442h3V472h-3ZM449 430h1V472h-1ZM450 441h1V472h-1ZM451 439h1V472h-1ZM452 437h1V472h-1ZM453 431h1V472h-1ZM454 438h1V472h-1ZM455 435h1V472h-1ZM456 442h4V472h-4ZM460 430h1V472h-1ZM461 449h1V472h-1ZM462 442h1V472h-1ZM463 449h1V472h-1ZM464 442h2V472h-2ZM466 449h1V472h-1ZM467 442h3V472h-3ZM470 433h1V472h-1ZM471 434h1V472h-1ZM472 427h1V472h-1ZM473 428h1V472h-1ZM474 430h1V472h-1ZM475 436h1V472h-1ZM476 442h3V472h-3ZM479 449h1V472h-1ZM480 442h2V472h-2ZM482 449h1V472h-1ZM483 442h6V472h-6ZM489 433h1V472h-1ZM490 439h1V472h-1ZM491 442h6V472h-6ZM497 449h1V472h-1ZM498 442h2V472h-2ZM500 433h1V472h-1ZM501 432h1V472h-1ZM502 429h1V472h-1ZM503 430h1V472h-1ZM504 424h1V472h-1ZM505 441h1V472h-1ZM506 442h4V472h-4ZM510 433h1V472h-1ZM511 449h1V472h-1ZM512 442h9V472h-9ZM521 449h1V472h-1ZM522 430h1V472h-1ZM523 449h1V472h-1ZM524 427h1V472h-1ZM525 442h1V472h-1ZM526 449h1V472h-1ZM527 442h1V472h-1ZM528 433h1V472h-1ZM529 442h1V472h-1ZM530 437h1V472h-1ZM531 442h3V472h-3ZM534 430h1V472h-1ZM535 442h4V472h-4ZM539 449h1V472h-1ZM540 442h9V472h-9ZM549 433h1V472h-1ZM550 449h1V472h-1ZM551 442h5V472h-5ZM556 449h2V472h-2ZM558 442h2V472h-2ZM560 437h1V472h-1ZM561 442h1V472h-1ZM562 449h1V472h-1ZM563 424h1V472h-1ZM564 442h8V472h-8ZM572 433h2V472h-2ZM574 442h2V472h-2ZM576 449h1V472h-1ZM577 436h1V472h-1ZM578 427h1V472h-1ZM579 442h2V472h-2ZM581 433h2V472h-2ZM583 449h3V472h-3ZM586 442h1V472h-1ZM587 433h1V472h-1ZM588 442h1V472h-1ZM589 449h1V472h-1ZM590 433h1V472h-1ZM591 442h2V472h-2ZM593 427h1V472h-1ZM594 442h3V472h-3ZM597 430h1V472h-1ZM598 449h1V472h-1ZM599 442h2V472h-2ZM601 437h1V472h-1ZM602 442h5V472h-5ZM607 449h1V472h-1ZM608 433h1V472h-1ZM609 437h1V472h-1ZM610 449h1V472h-1ZM611 442h1V472h-1ZM612 449h1V472h-1ZM613 442h4V472h-4ZM617 437h1V472h-1ZM618 442h3V472h-3ZM621 430h1V472h-1ZM622 442h2V472h-2ZM624 449h1V472h-1ZM625 442h6V472h-6ZM631 449h1V472h-1ZM632 442h1V472h-1ZM633 449h3V472h-3ZM636 442h9V472h-9ZM645 449h1V472h-1ZM646 437h1V472h-1ZM647 442h1V472h-1ZM648 449h1V472h-1ZM649 442h5V472h-5ZM654 421h1V472h-1ZM655 442h1V472h-1ZM656 449h1V472h-1ZM657 437h1V472h-1ZM658 442h5V472h-5ZM663 449h1V472h-1ZM664 442h1V472h-1ZM665 433h1V472h-1ZM666 442h7V472h-7ZM673 449h1V472h-1ZM674 442h2V472h-2ZM676 449h1V472h-1ZM677 442h1V472h-1ZM678 449h3V472h-3ZM681 442h1V472h-1ZM682 449h2V472h-2ZM684 442h1V472h-1ZM685 449h1V472h-1ZM686 442h1V472h-1ZM687 433h1V472h-1ZM688 440h1V472h-1ZM689 438h1V472h-1ZM690 442h1V472h-1ZM691 430h1V472h-1ZM692 442h2V472h-2ZM694 449h3V472h-3ZM697 437h1V472h-1ZM698 442h1V472h-1ZM699 449h4V472h-4ZM703 433h1V472h-1ZM704 442h1V472h-1ZM705 449h1V472h-1Z" fill="#0050ff"/><path d="M58 462h1V472h-1ZM178 462h2V472h-2ZM275 462h1V472h-1ZM318 462h1V472h-1ZM330 462h2V472h-2ZM335 462h1V472h-1ZM338 462h1V472h-1ZM359 462h1V472h-1ZM373 449h1V472h-1ZM373 462h1V472h-1ZM374 449h1V472h-1ZM374 462h1V472h-1ZM375 449h1V472h-1ZM375 462h1V472h-1ZM376 449h1V472h-1ZM376 462h1V472h-1ZM377 449h1V472h-1ZM377 462h1V472h-1ZM378 449h1V472h-1ZM378 462h1V472h-1ZM392 462h2V472h-2ZM396 462h1V472h-1ZM412 462h1V472h-1ZM418 462h2V472h-2ZM431 462h2V472h-2ZM436 462h1V472h-1ZM438 462h1V472h-1ZM453 462h1V472h-1ZM455 462h1V472h-1ZM460 462h1V472h-1ZM475 462h3V472h-3ZM499 462h1V472h-1ZM503 462h1V472h-1ZM528 462h1V472h-1ZM546 462h1V472h-1ZM548 462h2V472h-2ZM555 462h1V472h-1ZM570 462h4V472h-4ZM577 462h1V472h-1ZM589 462h1V472h-1ZM621 462h1V472h-1ZM691 462h1V472h-1Z" fill="#002070"/>
<path d="M45 351.5H753M45 355.5H753M45 360.5H753M45 367.5H753M45 380.5H753M45 392.5H753M45 396.5H753M45 401.5H753M45 408.5H753M45 421.5H753M45 433.5H753M45 442.5H753M45 449.5H753M45 462.5H753" stroke="#808080" stroke-dasharray="1 2" fill="none"/>
<path d="M45 361.5H753M45 437.5H753" stroke="#f00" stroke-dasharray="1 2" fill="none"/>
<path d="M115.5 472V340M186.5 472V340M257.5 472V340M328.5 472V340M399.5 472V340M470.5 472V340M541.5 472V340M612.5 472V340M683.5 472V340" stroke="#808080" stroke-dasharray="1 2" fill="none"/>
<path d="M706.5 472V340" stroke="#000" stroke-dasharray="1 2" fill="none"/>
<rect x="44.5" y="340.5" width="709" height="132" fill="none" stroke="#a0a0a0"/>
<g fill="#000" shape-rendering="auto"><text x="153" y="45" text-anchor="end">Tot</text><text x="203" y="45" text-anchor="end">Max</text><text x="254" y="45" text-anchor="end">Avg</text><text x="153" y="63" text-anchor="end">0</text><text x="203" y="63" text-anchor="end">0</text><text x="254" y="63" text-anchor="end">0.00</text><text x="3" y="77" textLength="19.5" lengthAdjust="spacingAndGlyphs">LDC</text><text x="153" y="77" text-anchor="end">7914159</text><text x="203" y="77" text-anchor="end">587</text><text x="254" y="77" text-anchor="end">10.36</text><text x="153" y="91" text-anchor="end">0</text><text x="203" y="91" text-anchor="end">0</text><text x="254" y="91" text-anchor="end">0.00</text><text x="153" y="105" text-anchor="end">0</text><text x="203" y="105" text-anchor="end">0</text><text x="254" y="105" text-anchor="end">0.00</text><text x="3" y="119" textLength="16.5" lengthAdjust="spacingAndGlyphs">BIS</text><text x="153" y="119" text-anchor="end">157179</text><text x="203" y="119" text-anchor="end">14</text><text x="254" y="119" text-anchor="end">0.21</text><text x="153" y="133" text-anchor="end">0</text><text x="203" y="133" text-anchor="end">0</text><text x="254" y="133" text-anchor="end">0.00</text><text x="153" y="147" text-anchor="end">0</text><text x="203" y="147" text-anchor="end">0</text><text x="254" y="147" text-anchor="end">0.00</text><text x="3" y="161" textLength="28.5" lengthAdjust="spacingAndGlyphs">UNCR</text><text x="153" y="161" text-anchor="end">0</text><text x="203" y="161" text-anchor="end">0</text><text x="254" y="161" text-anchor="end">0.00</text><text x="547" y="50" text-anchor="end">500</text>
<text x="547" y="66" text-anchor="end">200</text>
<text x="547" y="79" text-anchor="end">100</text>
<text x="547" y="91" text-anchor="end">50</text>
<text x="547" y="107" text-anchor="end">20</text>
<text x="547" y="120" text-anchor="end">10</text>
<text x="547" y="132" text-anchor="end">5</text>
<text x="547" y="148" text-anchor="end">2</text>
<text x="547" y="161" text-anchor="end">1</text><text x="577.3" y="181" textLength="27.5" lengthAdjust="spacingAndGlyphs">10 GB</text>
<text x="619.3" y="181" textLength="27.5" lengthAdjust="spacingAndGlyphs">20 GB</text>
<text x="661.3" y="181" textLength="27.5" lengthAdjust="spacingAndGlyphs">30 GB</text>
<text x="703.3" y="181" textLength="27.5" lengthAdjust="spacingAndGlyphs">40 GB</text><text x="42" y="203" text-anchor="end">500</text>
<text x="42" y="219" text-anchor="end">200</text>
<text x="42" y="232" text-anchor="end">100</text>
<text x="42" y="244" text-anchor="end">50</text>
<text x="42" y="260" text-anchor="end">20</text>
<text x="42" y="273" text-anchor="end">10</text>
<text x="42" y="285" text-anchor="end">5</text>
<text x="42" y="301" text-anchor="end">2</text>
<text x="42" y="314" text-anchor="end">1</text><text x="172.3" y="334" textLength="27.5" lengthAdjust="spacingAndGlyphs">10 GB</text>
<text x="314.3" y="334" textLength="27.5" lengthAdjust="spacingAndGlyphs">20 GB</text>
<text x="456.3" y="334" textLength="27.5" lengthAdjust="spacingAndGlyphs">30 GB</text>
<text x="598.3" y="334" textLength="27.5" lengthAdjust="spacingAndGlyphs">40 GB</text><text x="42" y="356" text-anchor="end">500</text>
<text x="42" y="372" text-anchor="end">200</text>
<text x="42" y="385" text-anchor="end">100</text>
<text x="42" y="397" text-anchor="end">50</text>
<text x="42" y="413" text-anchor="end">20</text>
<text x="42" y="426" text-anchor="end">10</text>
<text x="42" y="438" text-anchor="end">5</text>
<text x="42" y="454" text-anchor="end">2</text>
<text x="42" y="467" text-anchor="end">1</text><text x="172.3" y="487" textLength="27.5" lengthAdjust="spacingAndGlyphs">10 GB</text>
<text x="314.3" y="487" textLength="27.5" lengthAdjust="spacingAndGlyphs">20 GB</text>
<text x="456.3" y="487" textLength="27.5" lengthAdjust="spacingAndGlyphs">30 GB</text>
<text x="598.3" y="487" textLength="27.5" lengthAdjust="spacingAndGlyphs">40 GB</text><text x="554" y="52" font-size="14px" textLength="36.5" lengthAdjust="spacingAndGlyphs">UNCR</text><text x="49" y="205" font-size="14px" textLength="26.5" lengthAdjust="spacingAndGlyphs">LDC</text><text x="49" y="358" font-size="14px" textLength="20.5" lengthAdjust="spacingAndGlyphs">BIS</text></g>
</svg></body></html>
